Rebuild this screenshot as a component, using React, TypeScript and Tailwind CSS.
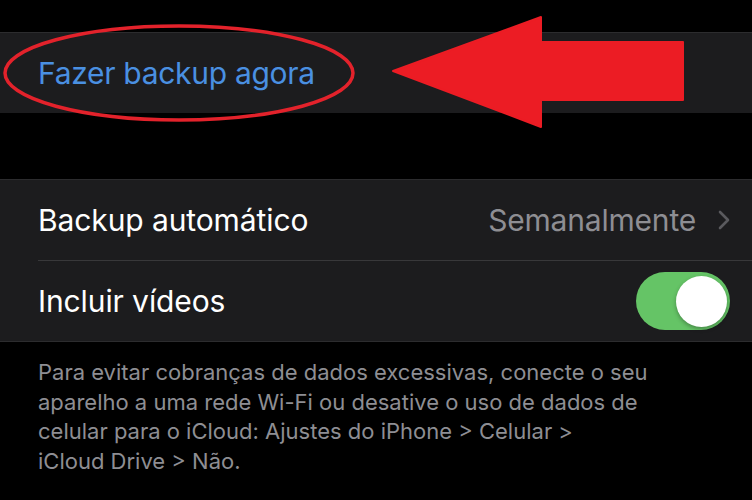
import React from "react";

const font = { fontFamily: "Inter, 'Noto Sans', sans-serif" };

export default function App() {
  return (
    <div
      className="relative w-[752px] h-[500px] overflow-hidden bg-black flex flex-col font-['Inter','Noto_Sans',sans-serif]"
    >
      <div className="h-[32px] shrink-0" />
      <div className="h-[81px] shrink-0 bg-[#1c1c1e] border-t border-[#2c2c2e] flex items-center pl-[38px]">
        <span className="text-[30px] leading-none text-[#4a90e2] tracking-[-0.3px]">Fazer backup agora</span>
      </div>
      <div className="h-[66px] shrink-0" />
      <div className="shrink-0 bg-[#1c1c1e] border-t border-b border-[#2c2c2e]">
        <div className="h-[80px] flex items-center pl-[38px] pr-[22px]">
          <span className="text-[30px] leading-none text-white tracking-[-0.1px]">Backup automático</span>
          <div className="ml-auto flex items-center gap-[22px]">
            <span className="text-[30px] leading-none text-[#8e8e93] tracking-[-0.2px]">Semanalmente</span>
            <svg width="12" height="20" viewBox="0 0 12 20" fill="none">
              <path d="M2 2 L10 10 L2 18" stroke="#5a5a5e" strokeWidth="2.6" strokeLinecap="round" strokeLinejoin="round" />
            </svg>
          </div>
        </div>
        <div className="ml-[38px] h-px bg-[#38383a]" />
        <div className="h-[80px] flex items-center pl-[38px] pr-[22px]">
          <span className="text-[30px] leading-none text-white tracking-[-0.1px]">Incluir vídeos</span>
          <div className="ml-auto w-[94px] h-[58px] rounded-full bg-[#65c466] flex items-center justify-end pr-[3px]">
            <div className="w-[51px] h-[51px] rounded-full bg-white shadow-[0_2px_4px_rgba(0,0,0,0.3)]" />
          </div>
        </div>
      </div>
      <p className="pl-[38px] pr-[20px] pt-[16px] text-[22px] leading-[29.5px] text-[#8e8e93]" style={font}>
        Para evitar cobranças de dados excessivas, conecte o seu
        <br />
        aparelho a uma rede Wi-Fi ou desative o uso de dados de
        <br />
        celular para o iCloud: Ajustes do iPhone &gt; Celular &gt;
        <br />
        iCloud Drive &gt; Não.
      </p>

      {/* annotation: ellipse and arrow */}
      <svg className="absolute left-0 top-0 pointer-events-none" width="752" height="500" viewBox="0 0 752 500">
        <ellipse cx="179" cy="73" rx="174" ry="47" fill="none" stroke="#e3222b" strokeWidth="3.5" />
        <polygon points="393,71 541,17 541,42 683,42 683,100 541,100 541,127" fill="#ec1c24" strokeLinejoin="round" stroke="#ec1c24" strokeWidth="2" />
      </svg>
    </div>
  );
}
